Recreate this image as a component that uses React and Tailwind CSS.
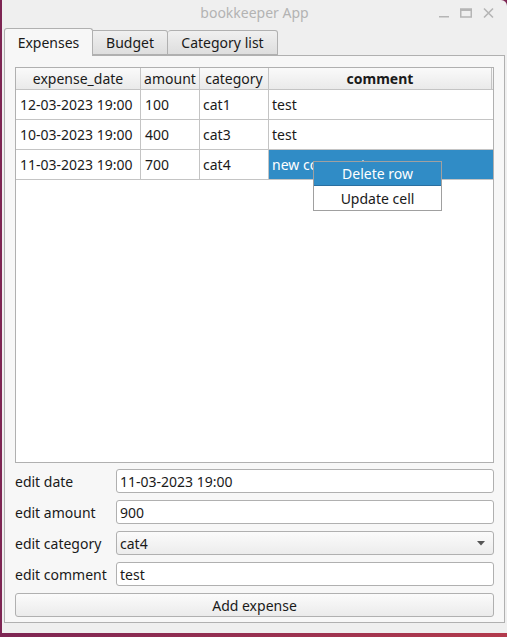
import React from "react";

const font = { fontFamily: '"Noto Sans", "Open Sans", sans-serif' };

function Row({ d, a, c, m, sel }) {
  return (
    <div className="flex h-[30px] border-b border-[#c4c4c4]">
      <div className="w-[125px] border-r border-[#c4c4c4] pl-[4px] flex items-center">{d}</div>
      <div className="w-[59px] border-r border-[#c4c4c4] pl-[4px] flex items-center">{a}</div>
      <div className="w-[69px] border-r border-[#c4c4c4] pl-[3px] flex items-center">{c}</div>
      <div className={"flex-1 pl-[3px] flex items-center " + (sel ? "bg-[#308cc6] text-white" : "")}>{m}</div>
    </div>
  );
}

function Field({ label, value, combo }) {
  return (
    <div className="flex items-center h-[24px]">
      <div className="w-[101px] shrink-0">{label}</div>
      <div
        className={
          "flex-1 h-[24px] border border-[#b0b0b0] rounded-[3px] flex items-center pl-[3px] pr-[8px] " +
          (combo ? "bg-gradient-to-b from-[#fbfbfb] to-[#ececec]" : "bg-white")
        }
      >
        <span className="flex-1">{value}</span>
        {combo && (
          <svg width="8" height="5" viewBox="0 0 8 5">
            <path d="M0 0 L8 0 L4 4.5 Z" fill="#555" />
          </svg>
        )}
      </div>
    </div>
  );
}

export default function App() {
  return (
    <div className="w-[507px] h-[637px] flex flex-col bg-[#7d2553] text-[14px] text-[#1a1a1a]" style={font}>
      <div className="flex-1 flex">
        <div className="w-[2px] bg-[#7d2553]" />
        <div className="flex-1 bg-[#efefef] flex flex-col rounded-tr-[6px]">
          {/* title bar */}
          <div className="h-[26px] relative flex items-center justify-center">
            <span className="text-[#b3b3b3] text-[14px] mt-[-1px]">bookkeeper App</span>
            <div className="absolute right-[13px] top-[7px] flex items-center gap-[11px]">
              <svg width="10" height="12" viewBox="0 0 10 12">
                <rect x="0" y="9" width="10" height="1.5" fill="#b5b5b5" />
              </svg>
              <svg width="12" height="12" viewBox="0 0 12 12">
                <rect x="0.75" y="2" width="10.5" height="8" fill="none" stroke="#b5b5b5" strokeWidth="1.5" />
                <rect x="0.75" y="2" width="10.5" height="2" fill="#b5b5b5" />
              </svg>
              <svg width="11" height="12" viewBox="0 0 11 12">
                <path d="M1 1.5 L10 10.5 M10 1.5 L1 10.5" stroke="#b5b5b5" strokeWidth="1.6" />
              </svg>
            </div>
          </div>
          {/* tabs */}
          <div className="px-[2px] flex-1 flex flex-col pb-[10px]">
            <div className="flex items-end h-[29px] relative z-10">
              <div className="w-[89px] h-[28px] border border-[#b0b0b0] border-b-0 rounded-t-[3px] bg-[#f7f7f7] flex items-center justify-center mb-[-1px] pb-[1px]">
                Expenses
              </div>
              <div className="w-[75px] h-[25px] border border-[#b0b0b0] border-l-0 rounded-tr-[3px] bg-gradient-to-b from-[#f0f0f0] to-[#dedede] flex items-center justify-center">
                Budget
              </div>
              <div className="w-[110px] h-[25px] border border-[#b0b0b0] border-l-0 rounded-t-[3px] bg-gradient-to-b from-[#f0f0f0] to-[#dedede] flex items-center justify-center">
                Category list
              </div>
            </div>
            <div className="flex-1 border border-[#b0b0b0] bg-[#f7f7f7] px-[10px] pt-[11px] pb-[5px] flex flex-col">
              {/* table */}
              <div className="h-[396px] border border-[#b0b0b0] bg-white flex flex-col relative">
                <div className="flex h-[22px] border-b border-[#c4c4c4] bg-gradient-to-b from-[#fafafa] to-[#eaeaea]">
                  <div className="w-[125px] border-r border-[#c4c4c4] flex items-center justify-center">expense_date</div>
                  <div className="w-[59px] border-r border-[#c4c4c4] flex items-center justify-center">amount</div>
                  <div className="w-[69px] border-r border-[#c4c4c4] flex items-center justify-center">category</div>
                  <div className="w-[223px] border-r border-[#c4c4c4] flex items-center justify-center font-bold">comment</div>
                </div>
                <div className="w-[477px]">
                  <Row d="12-03-2023 19:00" a="100" c="cat1" m="test" />
                  <Row d="10-03-2023 19:00" a="400" c="cat3" m="test" />
                  <Row d="11-03-2023 19:00" a="700" c="cat4" m="new comment" sel />
                </div>
                {/* context menu */}
                <div className="absolute left-[297px] top-[93px] w-[129px] border border-[#a0a0a0] bg-white text-[14px]">
                  <div className="h-[24px] bg-[#308cc6] border-b border-[#2a6fa0] text-white flex items-center justify-center">Delete row</div>
                  <div className="h-[24px] flex items-center justify-center">Update cell</div>
                </div>
              </div>
              {/* form */}
              <div className="flex flex-col gap-[7px] mt-[6px]">
                <Field label="edit date" value="11-03-2023 19:00" />
                <Field label="edit amount" value="900" />
                <Field label="edit category" value="cat4" combo />
                <Field label="edit comment" value="test" />
                <div className="h-[24px] border border-[#b0b0b0] rounded-[3px] bg-gradient-to-b from-[#fbfbfb] to-[#ebebeb] flex items-center justify-center">
                  Add expense
                </div>
              </div>
            </div>
          </div>
        </div>
      </div>
      <div className="h-[7px] bg-gradient-to-r from-[#7d2553] to-[#b23a4c]" />
    </div>
  );
}
